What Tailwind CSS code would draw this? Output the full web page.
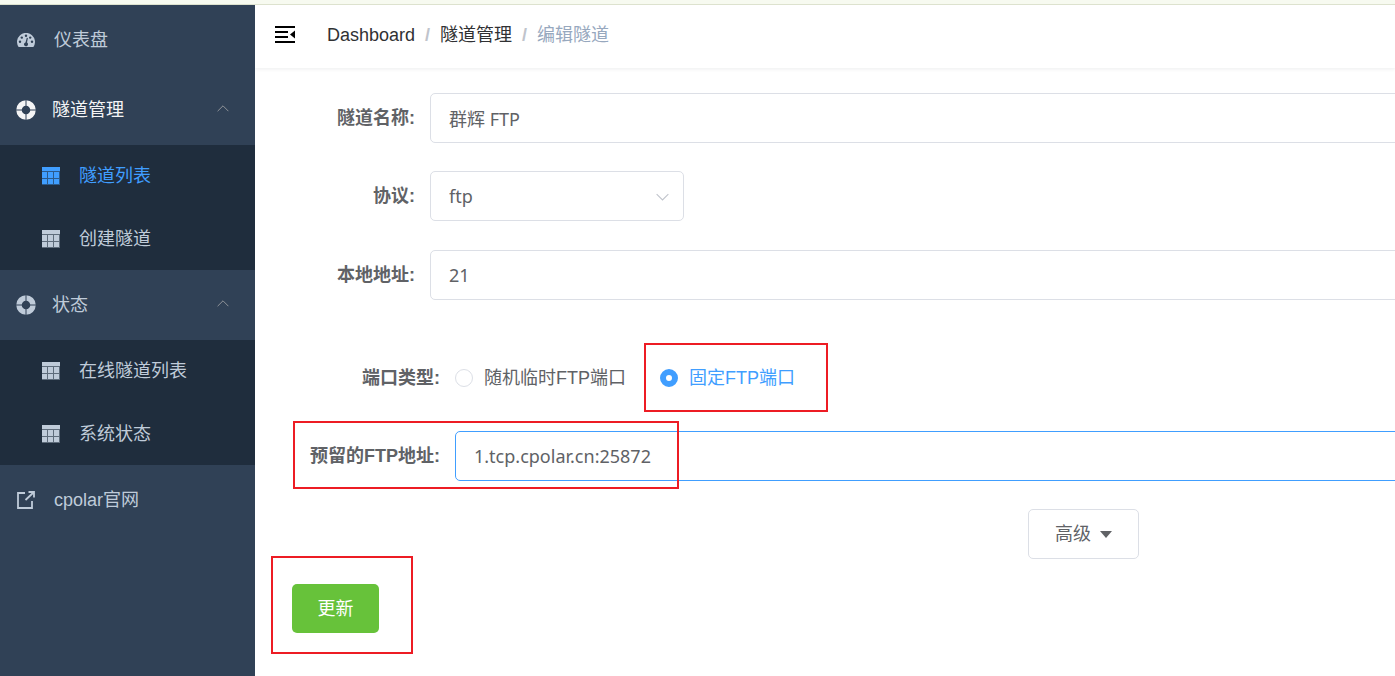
<!DOCTYPE html>
<html lang="zh-CN">

<head>
    <meta charset="UTF-8">
    <meta name="viewport" content="width=device-width, initial-scale=1.0">
    <title>编辑隧道</title>
    <script src="https://cdn.jsdelivr.net/npm/@tailwindcss/browser@4"></script>
</head>

<body class="flex flex-col h-screen overflow-hidden bg-white text-lg leading-6 text-[#606266] font-['Liberation_Sans','Noto_Sans_CJK_SC',sans-serif]">
    <svg class="hidden">
        <symbol id="ring" viewBox="0 0 20 20">
            <circle cx="10" cy="10" r="7" fill="none" stroke="currentColor" stroke-width="5.5" />
            <path d="M10 0v6M10 14v6M0 10h6M14 10h6" stroke="#304156" stroke-width="1" />
        </symbol>
        <symbol id="table" viewBox="0 0 18 18">
            <path d="M0 0h18v18H0z" fill="currentColor" opacity=".4" />
            <path d="M0 0h18v4H0zM0 5h5v6H0zM6 5h5v6H6zM12 5h5v6h-5zM0 12h5v5H0zM6 12h5v5H6zM12 12h5v5h-5z" fill="currentColor" />
        </symbol>
        <symbol id="up" viewBox="0 0 12 7">
            <path d="M.6 6.200 6 .8l5.400 5.400" fill="none" stroke="currentColor" />
        </symbol>
    </svg>

    <div class="h-[5px] shrink-0 bg-[#f7faf0] border-b border-[#dde2ce]"></div>

    <div class="flex flex-1 min-h-0">
        <!-- Sidebar -->
        <nav class="w-[255px] shrink-0 bg-[#304156] text-[#bfcbd9]">
            <a href="#" class="flex items-center h-[70px] pl-[17px] gap-[19px]">
                <svg class="w-[18px] h-[14px]" viewBox="0 0 18 14">
                    <path d="M1.600 14A9 9 0 1 1 16.400 14z" fill="currentColor" />
                    <g fill="#304156">
                        <circle cx="3" cy="8.700" r="1.200" />
                        <circle cx="4.800" cy="4.600" r="1.200" />
                        <circle cx="9" cy="2.700" r="1.200" />
                        <circle cx="13.200" cy="4.600" r="1.200" />
                        <circle cx="15" cy="8.700" r="1.200" />
                        <path d="M9.800 4.800l1.100.2-.9 4.600a2 2 0 1 1-1.500-.2z" />
                    </g>
                </svg>
                仪表盘
            </a>
            <button class="flex items-center w-full h-[70px] pl-4 pr-[26px] text-[#f4f4f5]">
                <svg class="w-5 h-5 mr-4"><use href="#ring" /></svg>
                隧道管理
                <svg class="w-3 h-[7px] ml-auto mb-1 text-[#909399]"><use href="#up" /></svg>
            </button>
            <div class="flex flex-col h-[125px] bg-[#1f2d3d]">
                <a href="#" class="flex flex-1 items-center pl-[42px] gap-[19px] text-[#409eff]">
                    <svg class="w-[18px] h-[18px]"><use href="#table" /></svg>隧道列表
                </a>
                <a href="#" class="flex flex-1 items-center pl-[42px] gap-[19px]">
                    <svg class="w-[18px] h-[18px]"><use href="#table" /></svg>创建隧道
                </a>
            </div>
            <button class="flex items-center w-full h-[70px] pl-4 pr-[26px]">
                <svg class="w-5 h-5 mr-4"><use href="#ring" /></svg>
                状态
                <svg class="w-3 h-[7px] ml-auto mb-1 text-[#909399]"><use href="#up" /></svg>
            </button>
            <div class="flex flex-col h-[125px] bg-[#1f2d3d]">
                <a href="#" class="flex flex-1 items-center pl-[42px] gap-[19px]">
                    <svg class="w-[18px] h-[18px]"><use href="#table" /></svg>在线隧道列表
                </a>
                <a href="#" class="flex flex-1 items-center pl-[42px] gap-[19px]">
                    <svg class="w-[18px] h-[18px]"><use href="#table" /></svg>系统状态
                </a>
            </div>
            <a href="#" class="flex items-center h-[70px] pl-[17px] gap-[19px]">
                <svg class="w-[18px] h-[18px]" viewBox="0 0 18 18" fill="none" stroke="currentColor" stroke-width="1.800">
                    <path d="M8 2H1v15h14v-7M8.500 9 17 1M11.500 1H17v5.500" />
                </svg>
                <span>cpolar官网</span>
            </a>
        </nav>

        <!-- Content -->
        <main class="flex-1 min-w-0 overflow-hidden">
            <header class="flex items-center h-[63px] pl-5 pb-[3px] shadow-[0_1px_4px_rgba(0,21,41,0.08)]">
                <button aria-label="收起菜单" class="text-black">
                    <svg class="w-[22px] h-[18px]" viewBox="0 0 22 18" fill="currentColor">
                        <path d="M0 0h20v2H0zM0 5h13v2H0zM0 10h13v2H0zM0 15h20v2H0zM20 4.500v8l-5-4z" />
                    </svg>
                </button>
                <nav class="flex items-center gap-[10px] ml-[30px] text-[#303133]">
                    <a href="#">Dashboard</a>
                    <span class="font-bold text-[#c0c4cc]">/</span>
                    <a href="#">隧道管理</a>
                    <span class="font-bold text-[#c0c4cc]">/</span>
                    <span class="text-[#97a8be]">编辑隧道</span>
                </nav>
            </header>

            <!-- the form is wider than the window and is cut off at the right -->
            <form class="min-w-[1640px] pl-[17px] pt-[25px]">
                <div class="flex items-center h-[50px]">
                    <label for="name" class="w-[158px] pr-[15px] text-right font-bold">隧道名称:</label>
                    <input id="name" type="text" value="群辉 FTP" class="flex-1 h-full px-[18px] border border-[#dcdfe6] rounded-[5px] font-['Noto_Sans','Noto_Sans_CJK_SC',sans-serif]">
                </div>
                <div class="flex items-center h-[50px] mt-7">
                    <label for="protocol" class="w-[158px] pr-[15px] text-right font-bold">协议:</label>
                    <div class="relative w-[254px] h-full">
                        <select id="protocol" class="appearance-none w-full h-full px-[18px] bg-white border border-[#dcdfe6] rounded-[5px] font-['Noto_Sans','Noto_Sans_CJK_SC',sans-serif]">
                            <option>ftp</option>
                        </select>
                        <svg class="absolute right-[15px] top-[22px] w-[13px] h-2 rotate-180 text-[#c0c4cc] pointer-events-none"><use href="#up" /></svg>
                    </div>
                </div>
                <div class="flex items-center h-[50px] mt-[29px]">
                    <label for="local" class="w-[158px] pr-[15px] text-right font-bold">本地地址:</label>
                    <input id="local" type="text" value="21" class="flex-1 h-full px-[18px] border border-[#dcdfe6] rounded-[5px] font-['Noto_Sans','Noto_Sans_CJK_SC',sans-serif]">
                </div>

                <div role="radiogroup" aria-labelledby="port-type" class="flex items-center h-[50px] mt-[53px]">
                    <span id="port-type" class="w-[183px] pr-[15px] text-right font-bold">端口类型:</span>
                    <label class="flex items-center gap-[11px] w-[205px]">
                        <input type="radio" name="port" class="appearance-none w-[18px] h-[18px] border border-[#dcdfe6] rounded-full checked:border-[6px] checked:border-[#409eff]">
                        随机临时FTP端口
                    </label>
                    <label class="relative flex items-center gap-[11px] text-[#409eff]">
                        <input type="radio" name="port" checked class="appearance-none w-[18px] h-[18px] border border-[#dcdfe6] rounded-full checked:border-[6px] checked:border-[#409eff]">
                        固定FTP端口
                        <span class="absolute -left-4 -top-[23px] w-[184px] h-[69px] border-2 border-[#ed1c24]"></span>
                    </label>
                </div>
                <div class="relative flex items-center h-[50px] mt-7">
                    <label for="reserved" class="w-[183px] pr-[15px] text-right font-bold">预留的FTP地址:</label>
                    <input id="reserved" type="text" value="1.tcp.cpolar.cn:25872" class="flex-1 h-full px-[18px] border border-[#409eff] rounded-[5px] font-['Noto_Sans','Noto_Sans_CJK_SC',sans-serif]">
                    <span class="absolute left-[21px] -top-[10px] w-[386px] h-[68px] border-2 border-[#ed1c24]"></span>
                </div>

                <div class="flex justify-center mt-7">
                    <button type="button" class="flex items-center justify-center gap-[9px] w-[111px] h-[50px] border border-[#dcdfe6] rounded-[5px]">
                        高级
                        <svg class="w-3 h-[7px]" viewBox="0 0 12 7"><path d="M0 0h12L6 7z" fill="currentColor" /></svg>
                    </button>
                </div>
                <div class="relative w-[87px] ml-5 mt-[25px]">
                    <button type="submit" class="w-full h-[49px] bg-[#67c23a] text-white rounded-[5px]">更新</button>
                    <span class="absolute -left-[21px] -top-7 w-[142px] h-[98px] border-2 border-[#ed1c24]"></span>
                </div>
            </form>
        </main>
    </div>
</body>

</html>
